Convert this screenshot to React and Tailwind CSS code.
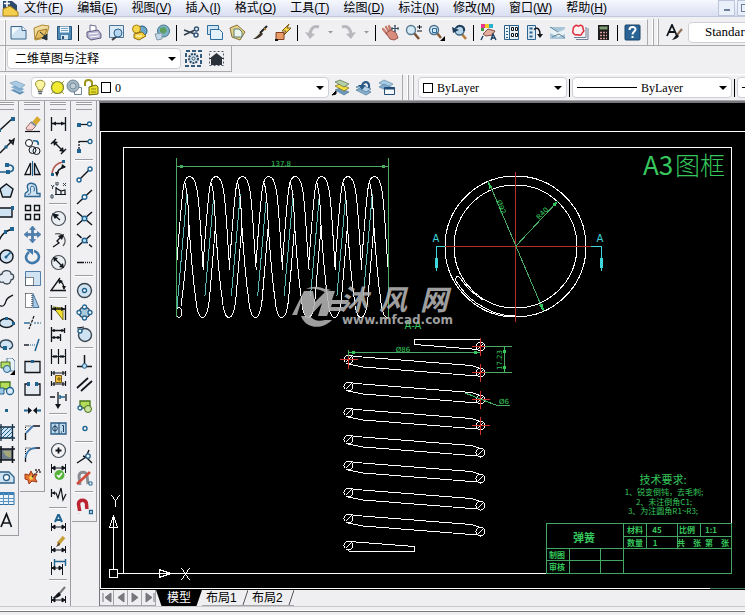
import React, { useState } from 'react';

const INK = '#10151c';
const BLUE = '#1f6391';
const PALE = '#cfe3f3';

/* 17px grid icons */
const icons = {
    app: <><path d="M1 1h9l5 4v11H1z" fill="#2c4a6e" /><path d="M1 9l7-3 8 6v4H1z" fill="#f3cf4d" stroke="#a67c16" /><path d="M5 0v7M2 3.500h6" stroke="#fff" strokeWidth="1.500" /></>,
    new: <><path d="M1 2.500h11l4 4V15H1z" fill={PALE} stroke="#38668e" /><path d="M2 3.500h7L2 11z" fill="#f5faff" /><path d="M12 2.500v4h4" fill="#fff" stroke="#38668e" /></>,
    open: <><path d="M1 4l8-3 7 1-3 12-11 2z" fill="#f1dc9e" stroke="#b08a35" /><path d="M2 15l3-8 9-2-3 8z" fill="#e5bf62" stroke="#a07a2a" /><path d="M7 8l6 5m-4 1l5 2V10z" fill="#26333f" stroke="#26333f" /></>,
    save: <><path d="M1.500 2.500h14v13h-14z" fill="#4d88b5" stroke="#28567d" /><path d="M4 2.500h9v6H4z" fill="#eef6fc" /><path d="M5 4.500h7M5 6.500h7" stroke="#7aa4c4" /><path d="M5 11h7v4.500H5z" fill="#d8e6f1" /><path d="M6 12h2v3H6z" fill="#28567d" /></>,
    print: <><path d="M5 7V1l6 1v5" fill="#fff" stroke="#6d6c8e" /><path d="M2 8l11-2 3 4v4l-10 2-4-3z" fill="#b9b7d2" stroke="#5e5c80" /><path d="M4 10l9-1M5 13l9-1" stroke="#fff" /></>,
    preview: <><path d="M1.500 1.500h14v12h-14z" fill="#d9e9f5" stroke="#4c7699" /><path d="M8 13l-4 3" stroke="#3b3f45" strokeWidth="2" /><circle cx="10" cy="9" r="4" fill="#b4d6ef" stroke="#2d5f88" /></>,
    publish: <><circle cx="11" cy="7" r="5" fill="#6aa6c9" stroke="#265a7e" /><circle cx="5.500" cy="5" r="4" fill="#f7d84c" stroke="#a57e12" /><path d="M3 10l8-2 4 4-7 4-5-2z" fill="#f4cf3c" stroke="#8b6c10" /><path d="M5 12h6" stroke="#fff" /></>,
    dwf: <><circle cx="9.500" cy="7" r="6" fill="#79b2c9" stroke="#467286" /><path d="M6 4l5-1 2 4-3 3-4-2z" fill="#5e9f60" /><path d="M1 10l7-1v6l-5 1z" fill="#c3d9ea" stroke="#8799a9" /></>,
    cut: <><path d="M1 6l11 4M1 11l11-5" stroke="#32414f" strokeWidth="1.600" /><circle cx="13.500" cy="5" r="2" fill="none" stroke="#2f5578" strokeWidth="1.400" /><circle cx="13" cy="11" r="2" fill="none" stroke="#2f5578" strokeWidth="1.400" /></>,
    copy: <><path d="M1.500 1.500h11v9h-11z" fill={PALE} stroke="#2c6d9d" /><path d="M4.500 5.500h9l3 3v7h-12z" fill="#e2f0fa" stroke="#2c6d9d" /></>,
    paste: <><path d="M1 4l7-3 8 7-5 8-8-3z" fill="#e7d18a" stroke="#87713a" /><path d="M5 5h5l3 3v5H5z" fill="#edf5ef" stroke="#538079" /></>,
    brush: <><path d="M15 2L8 9" stroke="#222" strokeWidth="2" /><path d="M9 8l2 2c-3 4-6 5-10 5 4-2 5-4 8-7z" fill="#3b3225" /><path d="M12 4l2 2" stroke="#b68a38" strokeWidth="1.500" /></>,
    block: <><path d="M14 0L7 7h4l-3 5 8-8h-4z" fill="#f9d54a" stroke="#7c5a10" /><path d="M1 8.500h8v7H1z" fill="#e99a66" stroke="#7f4122" /><path d="M0 15h3v2H0z" fill="#111" /></>,
    undo: <><path d="M15 3c-6-2-9 3-9 8" fill="none" stroke="#b8b9bd" strokeWidth="3" /><path d="M1 8l10 2-5 5z" fill="#b8b9bd" /></>,
    redo: <><path d="M2 3c6-2 9 3 9 8" fill="none" stroke="#b8b9bd" strokeWidth="3" /><path d="M16 8L6 10l5 5z" fill="#b8b9bd" /></>,
    caret: <path d="M6 7h5L8.500 9.500z" fill="#97989c" />,
    pan: <><path d="M5 10L1 5M7 8L4 3M9 7L7 2" stroke="#c87b6c" strokeWidth="2.400" strokeLinecap="round" /><path d="M4 9l5-3 5 3 2 5-4 2-4-1z" fill="#d98e7d" stroke="#9b5247" /><path d="M13 1v7M9.500 4.500h7M12 2h2M12 7h2M10 3v3M16 3v3" stroke="#34495c" /></>,
    zoomrt: <><path d="M9 9l5 6" stroke="#7a5233" strokeWidth="2.500" /><circle cx="6" cy="6" r="4.500" fill="#d5eaf7" stroke="#58798f" strokeWidth="1.400" /><path d="M12 3h5M14.500 1v4M12 7h5" stroke={INK} /></>,
    zoomwin: <><path d="M9 9l4 5" stroke="#8b5d35" strokeWidth="2.500" /><circle cx="6" cy="6" r="4.500" fill="#d5eaf7" stroke="#48708c" strokeWidth="1.400" /><path d="M4.500 4.500h4v4h-4z" fill="none" stroke="#2e6695" /><path d="M17 12v5h-5z" fill="#000" /></>,
    zoomprev: <><path d="M10 9l5 6" stroke="#b37a3a" strokeWidth="2.500" /><circle cx="8.500" cy="6.500" r="4.500" fill="#b6d5e9" stroke="#3d6683" strokeWidth="1.400" /><path d="M13 7c1-5-5-7-8-3" fill="none" stroke="#1d3e5c" strokeWidth="2" /><path d="M1 3l1 6 6-3z" fill="#1d3e5c" /></>,
    props: <><path d="M1 0h4v4H1z" fill="#e6388a" /><path d="M5 0h4v4H5z" fill="#f0c929" /><path d="M9 0h4v4H9z" fill="#27b1d0" /><path d="M1 4h3v3H1z" fill="#3c9a45" /><path d="M3 10l5-5 7 2-3 4-6 1z" fill="#e3ae9d" stroke="#814b3e" /><path d="M3 12l-2 4M11 16l2-6 3 6m-4-2h3" fill="none" stroke="#1c3f60" strokeWidth="1.400" /></>,
    dcenter: <><path d="M1.500 1.500h14v14h-14z" fill="#eaf3fa" stroke="#2c5f88" /><path d="M6.500 1.500v14M3 4.500h2M3 7.500h2M3 10.500h2M3 13.500h2" stroke="#2c5f88" /><path d="M8.500 3.500h2v3h-2zM12.500 3.500h2v3h-2zM8.500 9.500h2v3h-2zM12.500 9.500h2v3h-2z" fill="#fff" stroke={INK} /></>,
    palette: <><path d="M1.500 1.500h8v14h-8z" fill="#dceaf5" stroke="#2c6390" /><path d="M3.500 4.500h3M3.500 8.500h3M3.500 12.500h3" stroke="#2c6390" strokeWidth="2" /><path d="M8 5.500c4-3 6 0 6 5" fill="none" stroke={INK} strokeWidth="1.500" /><path d="M11 10h6l-3 4z" fill={INK} /></>,
    sheet: <><path d="M1 3h15v12H1z" fill="#a8c6d7" /><path d="M1 3l9 5 6-3v5l-7 3-8-4z" fill="#e8f1f4" /><path d="M3 13l7-3 6 4M1 3l8 5" stroke="#5e8399" fill="none" /></>,
    markup: <><path d="M4 15.500h12V4M2 13.500h12V3" fill="none" stroke="#6f7f96" /><path d="M3 2c2-2 3 1 4 0s4-1 4 2 2 2 0 4-1 4-4 3-3 1-5-1-1-2-1-4 0-3 2-4z" fill="#fff1f1" stroke="#dd2c3c" strokeWidth="1.500" /></>,
    calc: <><path d="M3 1h11v15H3z" fill="#1c1b1c" /><path d="M4.500 2.500h8v3h-8z" fill="#7c9b71" /><path d="M5 8.500h7M5 11.500h7M5 14.500h7" stroke="#d49a93" strokeWidth="1.500" strokeDasharray="2 1" /></>,
    help: <><rect x="1" y="1" width="15" height="15" rx="1" fill="#2a6496" stroke="#194266" /><path d="M5.500 6c0-4 6-4 6-.5 0 2-3 2-3 5M8.500 12v2" fill="none" stroke="#fff" strokeWidth="2" /></>,
    textstyle: <><path d="M1 12L6 1l5 11M3 8h6" fill="none" stroke={INK} strokeWidth="1.800" /><path d="M16 5l-5 6" stroke="#8d6f57" strokeWidth="2" /><path d="M11 10l2 2c-2 3-4 3-7 4 2-2 3-4 5-6z" fill={INK} /></>,
    gear: <><path d="M1 1h15v15H1z" fill="none" stroke="#345b7c" strokeWidth="2" strokeDasharray="4 2" /><circle cx="8.500" cy="8.500" r="4.500" fill="#cfdeea" stroke="#2f4e6a" strokeWidth="2" strokeDasharray="2 1" /><circle cx="8.500" cy="8.500" r="1.500" fill="#fff" stroke="#2f4e6a" /></>,
    home: <><path d="M1.500 1.500h14v14h-14z" fill="none" stroke="#515a64" strokeDasharray="2 2" /><path d="M1 9l7.500-6L16 9h-2v6H3V9z" fill="#2b3138" /></>,
    layers: <><path d="M1 11l6-2 9 4-5 3z" fill="#5e8eb4" stroke="#fff" strokeWidth=".5" /><path d="M1 8l6-2 9 4-5 3z" fill="#7facd0" stroke="#fff" strokeWidth=".5" /><path d="M1 4l6-2 9 4-5 4z" fill="#a9cbe4" stroke="#5b88ab" strokeWidth=".5" /></>,
    layercur: <><path d="M3 11l5-2 9 4-5 3z" fill="#6c99bb" stroke="#355f80" strokeWidth=".5" /><path d="M3 7l5-2 9 4-5 3z" fill="#f5dc3d" stroke="#75681a" strokeWidth=".7" /><path d="M3 3l5-2 9 4-5 3z" fill="#b4cfa6" stroke="#507052" strokeWidth=".7" /><path d="M0 16l4-4v3z" fill="#000" stroke="#000" /></>,
    layerprev: <><path d="M1 11l6-2 9 4-5 3z" fill="#8bb4d2" stroke="#447497" strokeWidth=".7" /><path d="M1 8l6-2 9 4-5 3z" fill="#b7d2e6" stroke="#447497" strokeWidth=".7" /><path d="M14 9c1-7-6-8-7-2" fill="none" stroke="#2b5a86" strokeWidth="2.200" /><path d="M3 6h8l-4 5z" fill="#2b5a86" /></>,
    layerstate: <><path d="M1 4l5-3 9 4-5 3z" fill="#a9cbe4" stroke="#5b88ab" strokeWidth=".7" /><path d="M1 8l5-3 9 4-5 3z" fill="#80abd0" stroke="#5b88ab" strokeWidth=".7" /><path d="M6.500 8.500h10v7h-10z" fill="#f4f8fb" stroke="#234d75" /><path d="M6 9.500h11" stroke="#234d75" strokeWidth="2" /></>,
    bulb: <><path d="M6 11c0-3-2.500-3-2.500-6C3.500 0 13 0 13 5c0 3-2.500 3-2.500 6z" fill="#fbf5a0" stroke="#9a8c33" /><path d="M6 12.500h4.500M6.500 14.500h3.500" stroke="#64656a" strokeWidth="1.500" /></>,
    sun: <><circle cx="8.500" cy="8.500" r="6" fill="#f2ea2e" stroke="#7f8734" strokeWidth="1.200" /><path d="M2 2l2 2M15 2l-2 2M2 15l2-2M15 15l-2-2" stroke="#b1ab33" /></>,
    freeze: <><path d="M8.500 8.500h7v7h-7z" fill="#fff" stroke="#6f8796" /><circle cx="7" cy="7" r="6" fill="#a3b6c3" stroke="#708696" /><circle cx="7" cy="7" r="3" fill="#c1ced7" stroke="#7b909e" /></>,
    lock: <><path d="M2 7V4c0-4 7-4 7 0v5" fill="none" stroke="#9e9518" strokeWidth="2" /><path d="M6 8l7-2 2 2v7l-9 1z" fill="#e7e02f" stroke="#69670d" /><path d="M8 10h5M8 13h5" stroke="#8b8413" /></>,

    /* draw */
    line: <><path d="M1 15L15 2" stroke={INK} strokeWidth="1.400" /><path d="M13 1h4v4h-4zM0 13h3v3H0z" fill={BLUE} /></>,
    xline: <><path d="M2 15L14 3M14 3l2-2-1 5-4-4z" stroke={INK} strokeWidth="1.400" /><path d="M6.500 7.500h3v3h-3z" fill={BLUE} /></>,
    pline: <><path d="M2 12h8c7 0 7-7 1-7H9" fill="none" stroke={BLUE} strokeWidth="1.700" /><path d="M7 3h4v4H7zM8 10h4v4H8z" fill={BLUE} /></>,
    polygon: <path d="M8.500 2l6.500 5-2.500 8h-8L2 7z" fill={PALE} stroke={INK} strokeWidth="1.400" />,
    rect: <><path d="M1 4h13v9H1z" fill={PALE} stroke={INK} strokeWidth="1.400" /><path d="M13 2h3v4h-3z" fill={BLUE} /></>,
    arc: <><path d="M1 15C3 9 7 5 14 3" fill="none" stroke={INK} strokeWidth="1.400" /><path d="M12 1h4v4h-4zM6 4h3v4H6z" fill={BLUE} /></>,
    circle: <><circle cx="8.500" cy="8.500" r="6.500" fill={PALE} stroke={INK} strokeWidth="1.400" /><path d="M8 9l5-5" stroke={BLUE} strokeWidth="1.500" /><circle cx="8" cy="9" r="1.500" fill={BLUE} /></>,
    cloud: <path d="M4 4c1-5 9-4 9 0 4 0 3 6 0 6-1 6-7 4-8 2-5 2-6-7-1-8z" fill="#e3eaf1" stroke="#394651" strokeWidth="1.300" />,
    spline: <path d="M1 13c4 3 6 0 7-4s4-4 7-6" fill="none" stroke={INK} strokeWidth="1.200" />,
    ellipse: <><ellipse cx="8.500" cy="9" rx="7" ry="4.500" fill={PALE} stroke={INK} strokeWidth="1.400" /><path d="M7 3h3v3H7zM14 8h3v3h-3z" fill={BLUE} /></>,
    earc: <><path d="M6 12C0 12 1 4 8 4s9 8 3 9" fill={PALE} stroke="#33475a" strokeWidth="1.400" /><path d="M5 10h4v4H5z" fill={BLUE} /></>,
    insert: <><path d="M9 0h5l3 3v10H9z" fill="#e7f1f8" stroke="#5d7c96" /><path d="M3 4h9v6H3z" fill="#b9dc65" stroke="#456b23" /><circle cx="9" cy="11" r="3.500" fill="#b9d9ef" stroke={BLUE} /><path d="M17 12v5h-5z" fill="#000" /></>,
    mkblock: <><path d="M2 2h10v7H2z" fill="#b5dc58" stroke="#45721c" strokeWidth="1.300" /><path d="M0 8h6v6H0z" fill="#9bc6e4" stroke={BLUE} /><circle cx="12" cy="11" r="3.500" fill="#d8eaf6" stroke={BLUE} strokeWidth="1.300" /></>,
    point: <path d="M7 7h3v3H7z" fill={BLUE} />,
    hatch: <><path d="M3 3h12v11H3z" fill="#cfe3f3" /><path d="M3 7l4-4M3 11l8-8M3 15L15 3M7 15l8-8M11 15l4-4" stroke={BLUE} /><path d="M3 0v17M14.500 0v17M0 3h17M0 14h17" stroke="#16324a" strokeWidth="1.300" /></>,
    grad: <><path d="M3 3h12v11H3z" fill="#6d7f8c" /><path d="M5 5h8v7l-5-2z" fill="#a7a679" /><path d="M3 0v17M14.500 0v17M0 3h17M0 14h17" stroke={INK} strokeWidth="1.600" /></>,
    region: <><path d="M1 4h10l5 5v6H1z" fill={PALE} stroke="#2f6087" strokeWidth="1.300" /><circle cx="8.500" cy="9.500" r="3" fill="#fff" stroke="#2f6087" strokeWidth="1.300" /></>,
    table: <><path d="M1 2.500h15v12H1z" fill="#edf5fb" stroke="#2f6ea3" /><path d="M1 3.500h15" stroke="#3d7fb5" strokeWidth="3" /><path d="M1 8.500h15M1 11.500h15M5.500 3v12M10.500 3v12" stroke="#5a93c0" /></>,
    mtext: <path d="M3 15L8.500 2l5 13M5 11h7" fill="none" stroke={INK} strokeWidth="1.700" />,

    /* modify */
    erase: <><path d="M1 15.500h15" stroke={INK} strokeWidth="1.200" /><path d="M15 2L9 9" stroke="#d9a92e" strokeWidth="5" /><path d="M7 6l5 4-4 4H3l-1-2z" fill="#f6d3d0" stroke="#9a6a68" /><path d="M7 6l5 4" stroke="#7f93a5" strokeWidth="2" /></>,
    copyobj: <><circle cx="5" cy="5" r="3.500" fill="#fff" stroke={INK} /><path d="M9 3c4-1 6 1 5 4" fill="none" stroke={BLUE} strokeWidth="1.700" /><circle cx="8.500" cy="12" r="3.500" fill="#e5edf4" stroke={INK} /><circle cx="12.500" cy="13" r="3.500" fill="none" stroke={INK} /></>,
    mirror: <><path d="M1 14.500L6.500 3v11.500z" fill="#fff" stroke={INK} strokeWidth="1.300" /><path d="M16 14.500L10.500 3v11.500z" fill={PALE} stroke={INK} strokeWidth="1.300" /><path d="M8.500 1v15" stroke={BLUE} /></>,
    offset: <><path d="M1 14.500h15v-3h-3c-1-4 1-6-2-9-6-3-9 0-7 5 1 3-3 2-3 5z" fill={PALE} stroke="#2c668f" strokeWidth="1.400" /><path d="M4 12.500c5-1 1-5 3-8 3-1 4 1 3 5" fill="none" stroke="#2c668f" /></>,
    array: <path d="M1.500 1.500h5v5h-5zM10.500 1.500h5v5h-5zM1.500 10.500h5v5h-5zM10.500 10.500h5v5h-5z" fill="#f4f4f4" stroke={INK} strokeWidth="1.400" />,
    move: <path d="M8.500 0l3 3.500H9.500v4h4v-2l3.500 3-3.500 3v-2h-4v4h2l-3 3.500-3-3.500h2v-4h-4v2L0 8.500l3.500-3v2h4v-4h-2z" fill="#4a80b2" stroke="#2e5d8a" strokeWidth=".5" />,
    rotate: <><path d="M5 4c-8 7 2 15 8 9 4-4 1-9-3-10" fill="none" stroke="#4079ac" strokeWidth="2.600" /><path d="M2 1h7v6z" fill="#4079ac" /></>,
    scale: <><path d="M1.500 1.500h15v14h-15z" fill={PALE} stroke="#5280aa" /><path d="M1.500 7.500h8v8h-8z" fill="#fff" stroke={INK} strokeDasharray="1 1" /></>,
    stretch: <><path d="M9 1.500l6 14H9z" fill="#a9c9e4" stroke="#49779f" /><path d="M1.500 1.500H8v14H1.500z" fill="#fff" stroke={INK} strokeDasharray="1 1" /></>,
    trim: <><path d="M0 9h6" stroke={BLUE} strokeWidth="1.400" /><path d="M10 9h7" stroke={BLUE} strokeDasharray="2 1" /><path d="M10 2L5 15" stroke={INK} strokeWidth="1.200" strokeDasharray="3 1" /></>,
    extend: <><path d="M0 9h5" stroke={INK} strokeWidth="1.400" /><path d="M6 9h5" stroke={BLUE} strokeDasharray="1 1" /><path d="M15 3l-4 12" stroke={BLUE} strokeWidth="1.500" /></>,
    breakpt: <><path d="M1 3.500h15v11H1z" fill="#e4eaf0" stroke={INK} strokeWidth="1.300" /><path d="M7 2h3v3H7z" fill={BLUE} /></>,
    break: <><path d="M4 4H1v11h15V4h-3" fill="#e4eaf0" stroke={INK} strokeWidth="1.300" /><path d="M3 2h3v4H3zM11 2h3v4h-3z" fill={BLUE} /></>,
    join: <><path d="M0 8.500h5M12 8.500h5" stroke={BLUE} strokeWidth="2" /><path d="M4 5l4 3.500L4 12zM13 5L9 8.500l4 3.500z" fill={INK} /></>,
    chamfer: <><path d="M1.500 16V9M9 2h7" fill="none" stroke={INK} strokeWidth="1.400" /><path d="M1.500 6V2H7" stroke={INK} strokeDasharray="1 1" fill="none" /><path d="M2 9l7-7" stroke="#4079ac" strokeWidth="1.800" /></>,
    fillet: <><path d="M1.500 16v-4M12 2h4" stroke={INK} strokeWidth="1.300" /><path d="M1.500 12C2 6 6 2 12 2" fill="none" stroke="#3878aa" strokeWidth="1.800" /><path d="M1.500 8V2H7" fill="none" stroke={INK} strokeDasharray="1 1" /></>,
    explode: <><path d="M1 6l4 1 2-4 2 4 4-1-2 4 2 4-5-1-3 3-1-4-3-1z" fill="#e67533" stroke="#a03717" /><path d="M5 9l3-2 1 4-3 1z" fill="#f6d04c" /><path d="M8 9l6-6M11 2h5v4" stroke="#3b2a2a" strokeWidth="1.400" fill="none" strokeDasharray="2 1" /></>,

    /* dimension */
    dimlin: <><path d="M1.500 1v14M15.500 1v14M2 7.500h13" stroke={INK} strokeWidth="1.300" /><path d="M2 7.500l4-2v4zM15 7.500l-4-2v4z" fill={INK} /></>,
    dimali: <><path d="M1 6l5-5M11 16l5-5M4 4l9 9" stroke={INK} strokeWidth="1.400" /><path d="M3 3l1 5 4-4zM14 14l-5-1 4-4z" fill={INK} /></>,
    dimarc: <><path d="M2 13C3 7 7 3 13 2" fill="none" stroke="#b8564b" strokeWidth="1.600" /><path d="M7 15c0-4 3-7 8-8" fill="none" stroke={INK} strokeWidth="1.500" /><path d="M1 13h3v3H1zM12 0h3v3h-3z" fill={BLUE} /><path d="M5 12l4 0-2 5zM12 4l4 3-5 2z" fill={INK} /></>,
    dimord: <><path d="M6 5v8M5 12.500h11M6 6l5 3 4-1v4M11 9v3" fill="none" stroke={INK} strokeWidth="1.200" /><path d="M1 3l2 2 1-2M2.500 5v2M13 1l3 3M16 1l-3 3M6 0h2v3H6zM1 13h2v3H1z" stroke="#345" fill="none" /></>,
    dimrad: <><circle cx="8.500" cy="8.500" r="7" fill="#eceff2" stroke="#454e57" strokeWidth="1.200" /><path d="M10 10L4 5M3 4l5 1-3 3z" stroke={INK} fill={INK} strokeWidth="1.200" /></>,
    dimjog: <><path d="M5 2c8-2 13 6 8 12" fill="none" stroke="#555" strokeWidth="1.200" /><path d="M3 15l6-4-2-2 5-5" fill="none" stroke={INK} strokeWidth="1.300" /><path d="M14 2l-6 2 4 4z" fill={INK} /></>,
    dimdia: <><circle cx="8.500" cy="8.500" r="7" fill="#eceff2" stroke="#454e57" strokeWidth="1.200" /><path d="M4 4l9 9" stroke={INK} strokeWidth="1.200" /><path d="M3 3l5 1-4 4zM14 14l-5-1 4-4z" fill={INK} /></>,
    dimang: <><path d="M16 14.500H1L10 2M10 5c3 2 4 5 4 8" fill="none" stroke={INK} strokeWidth="1.300" /><path d="M8 3l5 2-4 3zM12 10h4l-2 4z" fill={INK} /></>,
    qdim: <><path d="M3 3l10 1v12z" fill="#f1dd2b" stroke="#7a7116" /><path d="M1.500 1v15M15.500 1v15M2 5h13" stroke={INK} strokeWidth="1.300" /><path d="M2 5l4-2v4zM15 5l-4-2v4z" fill={INK} /></>,
    dimbase: <path d="M1.500 1v15M1.500 4.500H15M14.500 2v5M10.500 8v7M2 11.500h8M4 3v3M12 3v3M4 10v3M8 10v3" stroke={INK} strokeWidth="1.300" />,
    dimcont: <path d="M1.500 1v15M15.500 1v15M8.500 1v15M2 8.500h13M4 7v3M6 7v3M11 7v3M13 7v3" stroke={INK} strokeWidth="1.200" />,
    dimspace: <><path d="M1.500 1v5M15.500 1v5M1.500 11v5M15.500 11v5M2 3h13M2 14h13M4 1v4M13 1v4M4 12v4M13 12v4" stroke={INK} strokeWidth="1.200" /><path d="M5.500 5.500h6v7h-6z" fill="#edbf3a" stroke="#775914" /><path d="M7 9h4M9 7v4" stroke="#775914" /></>,
    dimbreak: <><path d="M0 5h5M16 2v7M8 0v13" stroke={INK} strokeWidth="1.300" /><path d="M8 17l-3-5h6z" fill={INK} /><path d="M10 5h5M10 3v4" stroke={BLUE} strokeWidth="1.500" /></>,
    tol: <><path d="M1 3h15v11H1z" fill="#bcd8ed" stroke="#285b84" strokeWidth="1.300" /><path d="M9 3v11M5 4.500v8M12 5.500h1.500V12M11 12h1" stroke="#1b3f5e" /><circle cx="5" cy="8.500" r="2.300" fill="none" stroke="#1b3f5e" /></>,
    center: <><circle cx="8.500" cy="8.500" r="7" fill="#f4f4f4" stroke="#454e57" strokeWidth="1.200" /><path d="M5.500 8.500h6M8.500 5.500v6" stroke={INK} strokeWidth="1.800" /></>,
    inspect: <><path d="M1.500 0v9M15.500 0v9M2 4h13M2 4l3-2v4zM15 4l-3-2v4z" fill={INK} stroke={INK} /><circle cx="9.500" cy="11" r="5" fill="#56b43c" /><path d="M7 11l2 2 3-4" fill="none" stroke="#fff" strokeWidth="1.500" /></>,
    joglin: <><path d="M1.500 3v8M2 7h4l2 5 3-10 2 12 3-6" fill="none" stroke={INK} strokeWidth="1.200" /><path d="M2 7l3-2v4z" fill={INK} /></>,
    dimtext: <><path d="M5 8L8.500 0 12 8M6 6h5" fill="none" stroke={BLUE} strokeWidth="2" /><path d="M1.500 9v8M15.500 9v8M2 13h13M2 13l3-2v4zM15 13l-3-2v4z" fill={INK} stroke={INK} /></>,
    dimedit: <><path d="M14 1L8 8" stroke="#c8a03c" strokeWidth="3.500" /><path d="M9 6l-3 5 4-2z" fill="#4c3b16" /><path d="M1.500 10v7M15.500 10v7M2 14h13M2 14l3-2v4zM15 14l-3-2v4z" fill={INK} stroke={INK} /></>,
    dimupd: <><path d="M4.500 1v7M15.500 1v7M5 3.500h10" stroke={BLUE} strokeWidth="1.400" /><path d="M1.500 4v13M12.500 6v11M2 10h10M2 10l3-2v4zM12 10L9 8v4z" fill={INK} stroke={INK} /></>,
    dimstyle: <><path d="M15 1L9 8" stroke="#777" strokeWidth="2" /><path d="M9 6l2 3c-3 3-5 3-9 3 3-1 4-4 7-6z" fill={INK} /><path d="M1.500 10v7M15.500 10v7M2 14h13M2 14l3-2v4zM15 14l-3-2v4z" fill={INK} stroke={INK} /></>,

    /* object snap */
    tracking: <><path d="M3 8.500h9" stroke={INK} strokeWidth="1.200" /><path d="M1 7h4v4H1z" fill={BLUE} /><circle cx="13.500" cy="8" r="2" fill="#fff" stroke={BLUE} strokeWidth="1.300" /></>,
    from: <><path d="M3 3.500h9" stroke={INK} strokeWidth="1.300" /><path d="M3 3v8" stroke={INK} strokeDasharray="2 1" strokeWidth="1.300" /><path d="M1 11h4v4H1z" fill={BLUE} /><circle cx="14" cy="3.500" r="2" fill="#fff" stroke={BLUE} strokeWidth="1.300" /></>,
    endpt: <><path d="M3 14L14 3" stroke={INK} strokeWidth="1.400" /><circle cx="3" cy="14" r="2" fill="#fff" stroke={BLUE} strokeWidth="1.400" /><circle cx="14" cy="3" r="2" fill="#fff" stroke={BLUE} strokeWidth="1.400" /></>,
    midpt: <><path d="M1 16L16 2" stroke={INK} strokeWidth="1.400" /><circle cx="8.500" cy="9" r="2.300" fill="#fff" stroke={BLUE} strokeWidth="1.400" /></>,
    inter: <><path d="M1 2l15 13M1 15L16 2" stroke={INK} strokeWidth="1.500" /><circle cx="8.500" cy="8.500" r="2.300" fill="#b9dcf0" stroke={BLUE} strokeWidth="1.400" /></>,
    appint: <><path d="M1 15L16 2" stroke={INK} strokeWidth="1.500" strokeDasharray="8 2" /><path d="M1 2l15 13" stroke={INK} strokeWidth="1.500" strokeDasharray="6 2" /><circle cx="8.500" cy="8.500" r="2.300" fill="#b9dcf0" stroke={BLUE} strokeWidth="1.400" /></>,
    ext: <><path d="M1 8.500h7" stroke={INK} strokeWidth="1.500" /><path d="M9 8.500h8" stroke={INK} strokeWidth="1.500" strokeDasharray="1 1" /></>,
    scenter: <><circle cx="8.500" cy="8.500" r="7" fill={PALE} stroke="#38444f" strokeWidth="1.400" /><circle cx="8.500" cy="8.500" r="2" fill="#fff" stroke={BLUE} strokeWidth="1.400" /></>,
    quad: <><circle cx="8.500" cy="8.500" r="5.500" fill="#a9c9dc" stroke="#38444f" strokeWidth="1.300" /><circle cx="8.500" cy="3" r="2" fill="#fff" stroke={BLUE} strokeWidth="1.300" /><circle cx="8.500" cy="14" r="2" fill="#fff" stroke={BLUE} strokeWidth="1.300" /><circle cx="3" cy="8.500" r="2" fill="#fff" stroke={BLUE} strokeWidth="1.300" /><circle cx="14" cy="8.500" r="2" fill="#fff" stroke={BLUE} strokeWidth="1.300" /></>,
    tangent: <><circle cx="9" cy="9" r="6.500" fill={PALE} stroke="#38444f" strokeWidth="1.400" /><circle cx="4" cy="5" r="2" fill="#fff" stroke={BLUE} strokeWidth="1.400" /><path d="M1 2l7-1" stroke={INK} /></>,
    perp: <><path d="M1 12.500h15M8.500 1v11" stroke={INK} strokeWidth="1.500" /><circle cx="8.500" cy="12" r="2.300" fill="#b9dcf0" stroke={BLUE} /></>,
    para: <path d="M1 12L12 2M5 15L16 5" stroke={INK} strokeWidth="1.700" />,
    sinsert: <><path d="M4 3h10v7H4z" fill="#b5dc58" stroke="#45721c" strokeWidth="1.300" /><circle cx="12" cy="11" r="3.500" fill="#c8e09b" stroke="#45721c" /><circle cx="4" cy="10" r="2" fill="#fff" stroke={BLUE} strokeWidth="1.300" /></>,
    node: <circle cx="9" cy="8.500" r="2" fill="#fff" stroke={BLUE} strokeWidth="1.400" />,
    nearest: <><path d="M1 15l9-6 3-7M7 8l3 1 6 6" fill="none" stroke={INK} strokeWidth="1.400" /><circle cx="12" cy="8" r="2.200" fill="#fff" stroke={BLUE} strokeWidth="1.300" /></>,
    nosnap: <><path d="M4 15L3 6c0-5 8-5 8 0l1 8" fill="none" stroke="#8a8d92" strokeWidth="3" /><path d="M1 14L14 2" stroke="#d14a3b" strokeWidth="2.500" /><path d="M13 12h3v3h-3z" fill="#fff" stroke={BLUE} /></>,
    snapset: <><path d="M4 15L2.500 6c0-5 8-5 8 0l.5 7" fill="none" stroke="#bb2431" strokeWidth="3.500" /><path d="M2 14h4M9 12h4" stroke="#eceef0" strokeWidth="2" /><path d="M13.500 12.500h3v3h-3z" fill="#fff" stroke={BLUE} strokeWidth="1.300" /></>,
};

const Icon = ({ name }) => (
    <svg viewBox="0 0 17 17" fill="none" className="h-[17px] w-[17px] shrink-0" aria-hidden="true">{icons[name]}</svg>
);

const Grip = () => (
    <span className="mr-1 flex h-full shrink-0 gap-[3px]">
        <i className="w-0.5 border-r border-[#a9a9ae] bg-white" />
        <i className="w-0.5 border-r border-[#a9a9ae] bg-white" />
    </span>
);

const ToolRow = ({ items }) => items.map((name, i) => {
    if (name === '|') return <span key={i} className="mr-[3px] ml-0.5 h-4 w-px shrink-0 bg-black" />;
    const narrow = name === 'caret';
    return (
        <button key={i} type="button" aria-label={name} className={narrow ? 'flex w-[13px] shrink-0 justify-center' : 'flex w-[23px] shrink-0 justify-center'}>
            <Icon name={name} />
        </button>
    );
});

const ToolColumn = ({ items, className }) => (
    <div className={`flex w-[25px] shrink-0 flex-col border-r border-b border-[#9c9ca2] pb-1 ${className}`}>
        <div className="mx-1 mt-px mb-1 h-[3px] shrink-0 border-y border-[#9c9ca2] bg-white" />
        <div className="mx-1 mb-[3px] h-px shrink-0 bg-[#9c9ca2]" />
        {items.map((name, i) => name === '|' ? (
            <span key={i} className="mx-[3px] my-[2px] h-0.5 shrink-0 border-t border-[#9c9ca2] bg-white" />
        ) : (
            <button key={i} type="button" aria-label={name} className="flex h-[22px] w-full shrink-0 items-center justify-center">
                <Icon name={name} />
            </button>
        ))}
    </div>
);

const Combo = ({ label, value, before, className, textClass }) => (
    <div className={`relative flex h-[21px] items-center rounded-sm border border-[#cfd0d6] bg-white ${className}`}>
        {before}
        <select aria-label={label} className={`h-full min-w-0 flex-1 appearance-none bg-transparent leading-4 outline-none ${textClass}`}>
            <option>{value}</option>
        </select>
        <svg viewBox="0 0 8 4" className="pointer-events-none absolute right-1 h-1 w-2"><path d="M0 0h8L4 4z" fill="#000" /></svg>
    </div>
);

const menus = [
    ['文件', 'F'], ['编辑', 'E'], ['视图', 'V'], ['插入', 'I'], ['格式', 'O'], ['工具', 'T'],
    ['绘图', 'D'], ['标注', 'N'], ['修改', 'M'], ['窗口', 'W'], ['帮助', 'H'],
];

const standard = ['new', 'open', 'save', '|', 'print', 'preview', 'publish', 'dwf', '|', 'cut', 'copy', 'paste', 'brush', 'block', '|',
    'undo', 'caret', 'redo', 'caret', '|', 'pan', 'zoomrt', 'zoomwin', 'zoomprev', '|', 'props', 'dcenter', 'palette', 'sheet', 'markup', 'calc', '|', 'help'];

const draw = ['line', 'xline', 'pline', 'polygon', 'rect', 'arc', 'circle', 'cloud', 'spline', 'ellipse', 'earc', 'insert', 'mkblock', 'point', 'hatch', 'grad', 'region', 'table', 'mtext'];
const modify = ['erase', 'copyobj', 'mirror', 'offset', 'array', 'move', 'rotate', 'scale', 'stretch', 'trim', 'extend', 'breakpt', 'break', 'join', 'chamfer', 'fillet', 'explode'];
const dimension = ['dimlin', 'dimali', 'dimarc', 'dimord', '|', 'dimrad', 'dimjog', 'dimdia', 'dimang', '|', 'qdim', 'dimbase', 'dimcont', 'dimspace', 'dimbreak', '|',
    'tol', 'center', 'inspect', 'joglin', '|', 'dimtext', 'dimedit', 'dimupd', '|', 'dimstyle'];
const snap = ['tracking', 'from', '|', 'endpt', 'midpt', 'inter', 'appint', 'ext', '|', 'scenter', 'quad', 'tangent', '|', 'perp', 'para', 'sinsert', 'node', '|', 'nearest', 'nosnap', '|', 'snapset'];

const GREEN = '#35c75c';
const DIM = '#4cab62';
const RED = '#b3302c';
const CYAN = '#3fd6dc';
const CJK = '"Noto Sans CJK SC", sans-serif';
const SIMPLEX = '"DejaVu Sans", sans-serif';

const SpringElevation = () => (
    <g>
        <clipPath id="spring"><path d="M176 150h213v170H176z" /></clipPath>
        <g clipPath="url(#spring)">
            {[0, 1, 2, 3, 4, 5, 6, 7].map((k) => (
                <g key={k} transform={`translate(${k * 26.4} 0)`}>
                    <path d={k === 0 ? 'M187 192L177 308' : 'M187.500 194L178.500 296'} stroke="#5cb9b6" />
                    <path d="M176.500 267C179 235 181 205 183 190 C185 172 194 172 197 190 C200 205 201 245 203.500 270" stroke="#fff" />
                    <path d="M185 183C187 190 188.500 210 189 225 C191 255 193 280 195.700 298 C198 324 207 324 209.500 298 C211 280 214 245 215.500 225" stroke="#fff" />
                </g>
            ))}
            <path d="M189 225C187 250 184 285 181 306" stroke="#fff" />
            <ellipse cx="179" cy="312.500" rx="2.500" ry="5" stroke="#fff" />
        </g>
        <path d="M176.500 158v159M388.500 158v159M177 166.500h211" stroke={DIM} />
        <path d="M177 166.500l6-2v4zM388 166.500l-6-2v4z" fill={DIM} />
        <text x="281" y="166" fontSize="7" textAnchor="middle" fill={GREEN} fontFamily={SIMPLEX}>137.8</text>
    </g>
);

const SpringPlan = () => (
    <g>
        <circle cx="515.500" cy="246.500" r="70.500" stroke="#fff" />
        <circle cx="515.500" cy="246.500" r="61.500" stroke="#fff" />
        <path d="M456 281C455 276 458 275 461 279C468 290 475 295 483 300M456 281C464 294 472 302 485 308C495 314 505 316 515 316" stroke="#fff" />
        <path d="M440 246.500h152M515.500 172v150" stroke={RED} />
        <path d="M488.500 181.500L543.500 311M515.500 246.500L557.500 201.500" stroke={DIM} />
        <path d="M488 181l1 8 3-2zM544 312l-5-7 4-1zM558 201l-3 6-3-3z" fill={GREEN} />
        <text transform="translate(499 208) rotate(67)" fontSize="7" textAnchor="middle" fill={GREEN} fontFamily={SIMPLEX}>Ø92</text>
        <text transform="translate(544 215) rotate(-46)" fontSize="7" textAnchor="middle" fill={GREEN} fontFamily={SIMPLEX}>R40</text>
        <path d="M445 246.500h-8.500V271M591 246.500h10.500V271" stroke={CYAN} />
        <path d="M434.500 258h4l-1 10h-2zM599.500 258h4l-1 10h-2z" fill={CYAN} />
        <text x="436" y="242" fontSize="10" textAnchor="middle" fill={CYAN} fontFamily={SIMPLEX}>A</text>
        <text x="600" y="242" fontSize="10" textAnchor="middle" fill={CYAN} fontFamily={SIMPLEX}>A</text>
    </g>
);

const Wire = ({ x, y, marked }) => (
    <g>
        <circle cx={x} cy={y} r="4.500" stroke="#fff" />
        <path d={`M${x - 3} ${y + 3}l6-6`} stroke="#fff" />
        {marked && <path d={`M${x - 9} ${y}h18M${x} ${y - 9}v18`} stroke="#d2322e" />}
    </g>
);

const SpringSection = () => {
    const left = [0, 1, 2, 3, 4, 5, 6, 7].map((k) => Math.round(359 + k * 26.57) + 0.5);
    const right = [0, 1, 2, 3, 4, 5, 6, 7].map((k) => Math.round(346 + k * 26.45) + 0.5);
    return (
        <g>
            {left.slice(0, 7).map((y) => (
                <path key={y} d={`M348 ${y - 4.500}L356 ${y - 3}L471 ${y + 6}L481 ${y + 9}M348 ${y + 4.500}L363 ${y + 7.500}L478 ${y + 16.500}`} stroke="#fff" />
            ))}
            <path d="M480 339.500H414.500V344.500L478 349.500M349 541.500L414.500 546.500V551.500H349" stroke="#fff" />
            {left.map((y, i) => <Wire key={y} x={348.5} y={y} marked={i === 0} />)}
            {right.map((y, i) => <Wire key={y} x={480.5} y={y} marked={i < 4} />)}
            <path d="M348.500 352.500H480M348.500 350v6M485 346.500h27M485 372.500h27M504.500 347v25M465 393l32 12.500h13" stroke={DIM} />
            <path d="M504.500 347l2 6h-4zM504.500 372l2-6h-4zM349 352.500l6-2v4zM480 352.500l-6-2v4zM476 397l-6-1v-2zM485 401l6 3v-2z" fill={GREEN} />
            <text x="403" y="352" fontSize="7" textAnchor="middle" fill={GREEN} fontFamily={SIMPLEX}>Ø86</text>
            <text x="504" y="404" fontSize="7" textAnchor="middle" fill={GREEN} fontFamily={SIMPLEX}>Ø6</text>
            <text transform="translate(502 360) rotate(-90)" fontSize="7" textAnchor="middle" fill={GREEN} fontFamily={SIMPLEX}>17.23</text>
            <text x="413" y="329" fontSize="10" textAnchor="middle" fill={GREEN} fontFamily={SIMPLEX}>A-A</text>
        </g>
    );
};

const blockText = [
    [584, 542, 11, '弹簧'], [635, 533, 8, '材料'], [657, 533, 8, '45'], [687, 533, 8, '比例'], [711, 533, 8, '1:1'],
    [635, 546, 8, '数量'], [655, 546, 8, '1'], [681, 546, 8, '共'], [697, 546, 8, '张'], [709, 546, 8, '第'], [725, 546, 8, '张'],
    [557, 558, 8, '制图'], [557, 570, 8, '审核'],
];

const TitleBlock = () => (
    <g>
        <path d="M546.500 523.500h185v50h-185zM623.500 523.500v50M646.500 523.500v25M677.500 523.500v25M700.500 523.500v13M623.500 536.500h108M546.500 548.500h185M546.500 560.500h77M569.500 548.500v25M600.500 548.500v25" stroke="#43a763" />
        {blockText.map(([x, y, size, text], i) => (
            <text key={i} x={x} y={y} fontSize={size} textAnchor="middle" fill={GREEN} fontFamily={CJK} fontWeight="700">{text}</text>
        ))}
        <g fill={GREEN} fontFamily={CJK} textAnchor="middle" fontSize="8">
            <text x="663" y="484" fontSize="11">技术要求:</text>
            <text x="664" y="495">1、锐变倒钝，去毛刺;</text>
            <text x="664" y="505">2、未注倒角C1;</text>
            <text x="663" y="514">3、为注圆角R1~R3;</text>
        </g>
    </g>
);

const Watermark = () => (
    <g fill="#b4b4b4" opacity=".88">
        <path d="M292 315l12-24h9l2 11 11-11h9l-3 9h17l-2 4h-15l-1 3h14l-2 4h-14l-2 5h-9l4-13-12 13h-5l-4-14-4 13z" />
        <path d="M306 289c10-5 22-1 26 7h-3c-5-6-12-8-23-7zM301 316c4 12 20 15 31 4h-7c-7 2-12 0-15-4z" />
        <path d="M326 285l1 4 4 1-4 1-1 4-1-4-4-1 4-1z" />
        <g fontFamily={CJK} fontSize="28" fontWeight="700" fontStyle="italic">
            <text x="340" y="310">沐</text>
            <text x="379" y="310">风</text>
            <text x="420" y="310">网</text>
        </g>
        <text x="342" y="324" fontFamily='"DejaVu Sans", sans-serif' fontWeight="700" fontSize="12">www.mfcad.com</text>
    </g>
);

const Drawing = () => (
    <svg viewBox="100 103 645 486" preserveAspectRatio="xMinYMin meet" fill="none" className="block min-h-0 w-full flex-1 bg-black" role="img" aria-label="A3图框">
        <g shapeRendering="crispEdges">
            <path d="M745 131.500H100.500V588.500H710M731.500 523V147.500H123.500V573.500H547" stroke="#fff" />
            <path d="M710 588.500h35" stroke="#3f7f57" />
            <SpringElevation />
            <SpringPlan />
            <SpringSection />
            <TitleBlock />
            <path d="M109.500 569.500h8v8h-8zM113.500 569V528M113.500 516l-4 11h8zM118 573.500h41M171 573.500l-12-4v8zM113.500 517v10M159 573.500h12" stroke="#fff" />
            <path d="M111.500 495l4 6 4-6M115.500 501v6M181.500 568l8 12M189.500 568l-8 12" stroke="#fff" />
        </g>
        <g fill={GREEN} fontFamily={CJK}>
            <text x="643" y="175" fontSize="26">A3</text>
            <text x="675" y="175" fontSize="25" fontWeight="300">图框</text>
        </g>
        <Watermark />
    </svg>
);

const navShapes = ['M3 3v9M11 3v9L5 7.5z', 'M10 3v9L4 7.5z', 'M4 3v9l6-4.5z', 'M4 3v9l6-4.5zM12 3v9'];

const LayoutTabs = () => {
    const [active, setActive] = useState('模型');
    return (
        <div className="flex h-4 shrink-0 items-stretch bg-[#efeef0] text-[12px] leading-4">
            {navShapes.map((d) => (
                <button key={d} type="button" aria-label="nav" className="w-[14px] shrink-0 border-r border-b border-[#a5a5aa]">
                    <svg viewBox="0 0 14 15" className="h-[15px] w-[14px]"><path d={d} fill="#77777c" stroke="#77777c" /></svg>
                </button>
            ))}
            {['模型', '布局1', '布局2'].map((tab) => (
                <button
                    key={tab}
                    type="button"
                    onClick={() => setActive(tab)}
                    className={tab === active
                        ? 'w-[46px] shrink-0 bg-black text-white [clip-path:polygon(0_0,100%_0,88%_100%,12%_100%)]'
                        : 'flex w-[46px] shrink-0 items-center justify-between border-b border-[#a5a5aa] pl-1 text-black'}
                >
                    <span>{tab}</span>
                    {tab !== active && <svg viewBox="0 0 6 15" className="h-[15px] w-1.5"><path d="M6 0L1 15" stroke="#55555a" /></svg>}
                </button>
            ))}
        </div>
    );
};

const App = () => (
    <div className="flex h-screen flex-col overflow-hidden bg-[#f0eff1] font-['Liberation_Sans','Noto_Sans_CJK_SC',sans-serif] text-[12px] text-black">
        <nav className="flex h-[17px] shrink-0 items-center border-b border-[#c3c7dc] bg-linear-to-b from-[#f6f8fe] to-[#d9dff2] pl-0.5">
            <Icon name="app" />
            <div className="ml-[5px] flex flex-1 gap-[14px] leading-4">
                {menus.map(([text, key]) => (
                    <button key={key} type="button" className="shrink-0 whitespace-nowrap">{text}(<u>{key}</u>)</button>
                ))}
            </div>
            <button type="button" aria-label="minimize" className="flex h-4 w-[17px] shrink-0 items-end justify-center border border-[#bcc5da] bg-[#eaf0fa] pb-1">
                <i className="h-0.5 w-1.5 bg-[#6d7f9d]" />
            </button>
            <button type="button" aria-label="restore" className="ml-0.5 flex h-4 w-2 shrink-0 items-center justify-end border border-r-0 border-[#bcc5da] bg-[#eaf0fa]">
                <i className="h-2 w-1 border border-r-0 border-[#6d7f9d]" />
            </button>
        </nav>

        <div className="flex h-[29px] shrink-0 pt-0.5">
            <div className="flex w-[648px] shrink-0 items-center border-t border-r border-b border-t-white border-[#a9a9ae] pl-1">
                <i className="mr-px h-full w-0.5 shrink-0 border-r border-[#a9a9ae] bg-white" />
                <ToolRow items={standard} />
            </div>
            <div className="flex min-w-0 flex-1 items-center border-b border-[#a9a9ae] pl-1">
                <Grip />
                <ToolRow items={['textstyle']} />
                <Combo label="text style" value="Standard" className="ml-0.5 w-[140px] shrink-0" textClass="pl-4 font-['Liberation_Serif',serif] text-[13px]" />
            </div>
        </div>

        <div className="flex h-7 shrink-0 pb-0.5">
            <div className="flex w-[232px] shrink-0 items-center border-r border-b border-[#a9a9ae] pl-1">
                <i className="h-full w-0.5 shrink-0 border-r border-[#a9a9ae] bg-white" />
                <Combo label="workspace" value="二维草图与注释" className="mr-px ml-px w-[174px] shrink-0" textClass="pl-[7px]" />
                <ToolRow items={['gear', 'home']} />
            </div>
        </div>

        <div className="flex h-[27px] shrink-0 border-b border-[#a9a9ae]">
            <div className="flex w-[403px] shrink-0 items-center border-t border-r border-white border-r-[#a9a9ae] pl-1">
                <i className="h-full w-0.5 shrink-0 border-r border-[#a9a9ae] bg-white" />
                <ToolRow items={['layers']} />
                <Combo
                    label="layer"
                    value="0"
                    className="ml-0.5 w-[298px] shrink-0"
                    textClass="pl-1 font-['Liberation_Serif',serif]"
                    before={<><Icon name="bulb" /><Icon name="sun" /><Icon name="freeze" /><Icon name="lock" /><i className="ml-px h-[11px] w-[10px] shrink-0 border border-black" /></>}
                />
                <ToolRow items={['layercur', 'layerprev', 'layerstate']} />
            </div>
            <div className="flex min-w-0 flex-1 items-center border-t border-white pl-1">
                <Grip />
                <Combo
                    label="color"
                    value="ByLayer"
                    className="w-[149px] shrink-0"
                    textClass="pl-1 font-['Liberation_Serif',serif]"
                    before={<i className="ml-1 h-[10px] w-[10px] shrink-0 border border-black" />}
                />
                <i className="mx-0.5 h-[18px] w-px shrink-0 bg-black" />
                <Combo
                    label="linetype"
                    value="ByLayer"
                    className="w-[160px] shrink-0"
                    textClass="pl-1 font-['Liberation_Serif',serif]"
                    before={<i className="ml-1 h-px w-[60px] shrink-0 bg-black" />}
                />
                <i className="mx-0.5 h-[18px] w-px shrink-0 bg-black" />
                <Combo label="lineweight" value="" className="w-[160px] shrink-0" textClass="" before={<i className="ml-1 h-px w-[60px] shrink-0 bg-black" />} />
            </div>
        </div>

        <div className="flex min-h-0 flex-1">
            <div className="flex shrink-0 items-start gap-px overflow-hidden pr-[2px]">
                <ToolColumn items={draw} className="-ml-1.5" />
                <ToolColumn items={modify} className="" />
                <ToolColumn items={dimension} className="" />
                <ToolColumn items={snap} className="" />
            </div>
            <div className="flex min-w-0 flex-1 flex-col border-t-2 border-l border-[#77777c]">
                <Drawing />
                <LayoutTabs />
            </div>
        </div>

        <footer className="flex h-[9px] shrink-0 flex-col border-t border-[#c9c9cd]">
            <i className="h-[3px] bg-[#efeef0]" />
            <i className="h-px bg-white" />
            <i className="h-px bg-[#77777c]" />
        </footer>
    </div>
);

export default App;
